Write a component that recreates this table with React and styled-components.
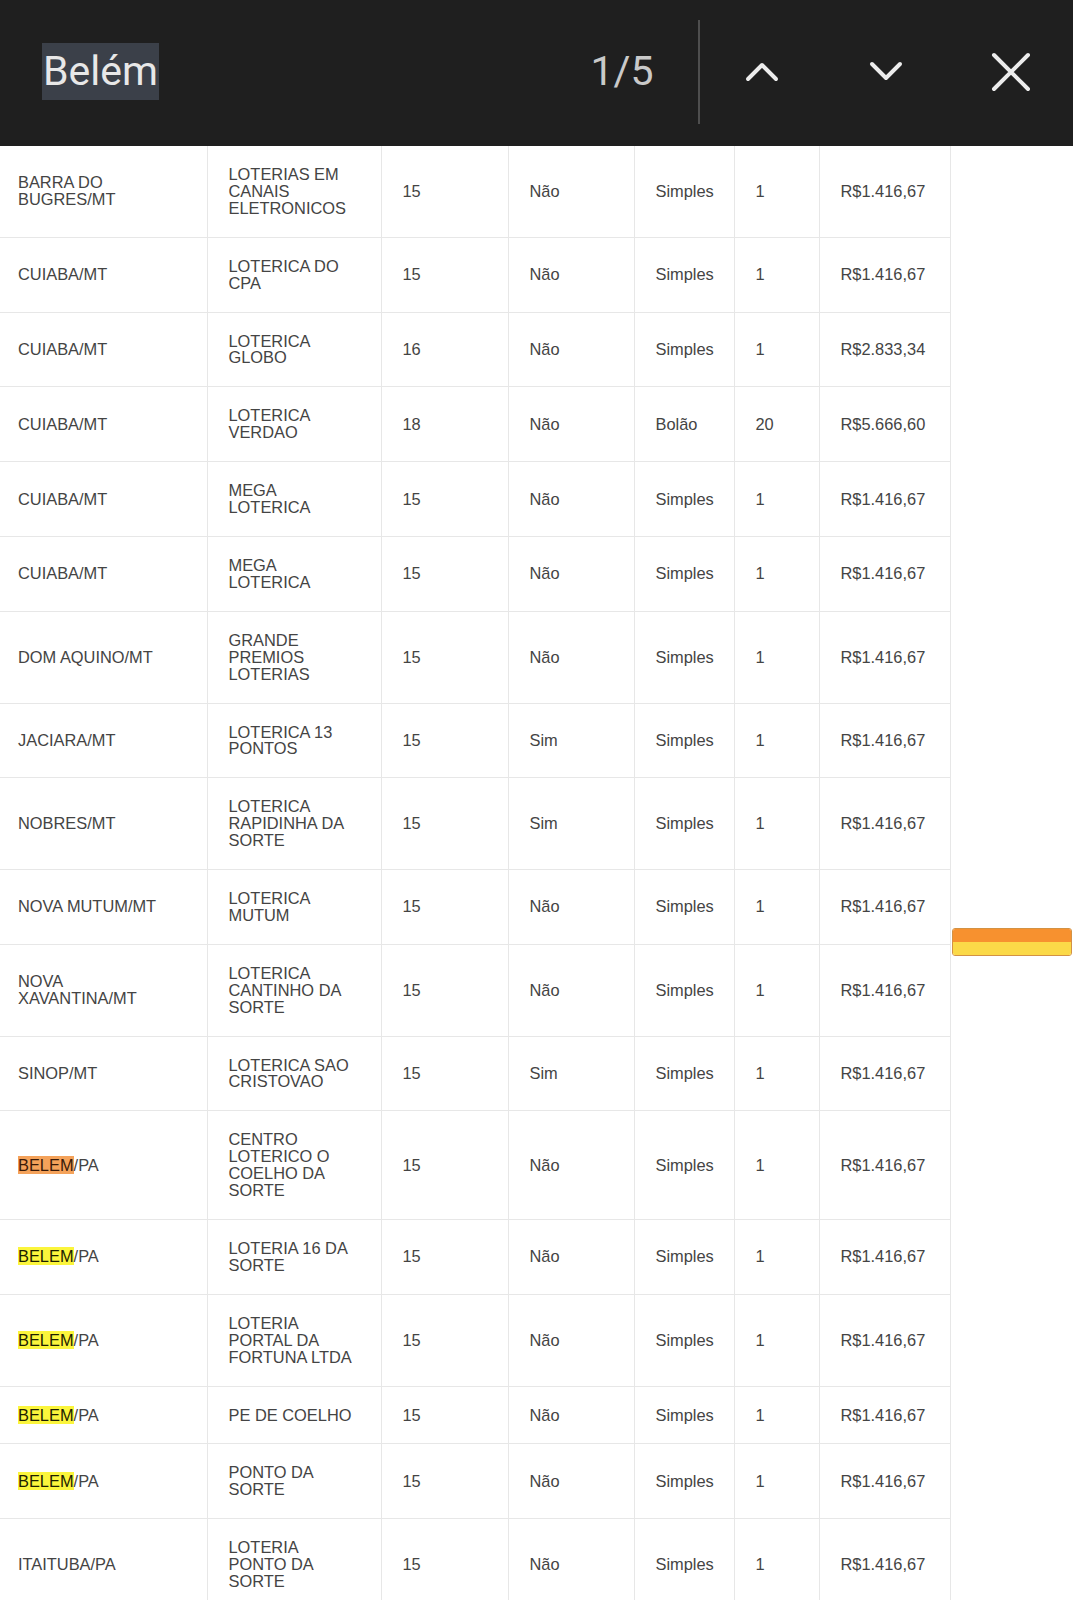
import React from "react";
import styled, { createGlobalStyle } from "styled-components";

const GlobalStyle = createGlobalStyle`
  html, body {
    margin: 0;
    padding: 0;
    background: #fff;
    scrollbar-width: none;
  }
  ::-webkit-scrollbar { display: none; }
  body {
    font-family: "Liberation Sans", Arial, sans-serif;
  }
`;

// dados da tabela
const rows = [
  { city: "BARRA DO BUGRES/MT", name: "LOTERIAS EM CANAIS ELETRONICOS", cotas: "15", acum: "Não", tipo: "Simples", qtd: "1", valor: "R$1.416,67" },
  { city: "CUIABA/MT", name: "LOTERICA DO CPA", cotas: "15", acum: "Não", tipo: "Simples", qtd: "1", valor: "R$1.416,67" },
  { city: "CUIABA/MT", name: "LOTERICA GLOBO", cotas: "16", acum: "Não", tipo: "Simples", qtd: "1", valor: "R$2.833,34" },
  { city: "CUIABA/MT", name: "LOTERICA VERDAO", cotas: "18", acum: "Não", tipo: "Bolão", qtd: "20", valor: "R$5.666,60" },
  { city: "CUIABA/MT", name: "MEGA LOTERICA", cotas: "15", acum: "Não", tipo: "Simples", qtd: "1", valor: "R$1.416,67" },
  { city: "CUIABA/MT", name: "MEGA LOTERICA", cotas: "15", acum: "Não", tipo: "Simples", qtd: "1", valor: "R$1.416,67" },
  { city: "DOM AQUINO/MT", name: "GRANDE PREMIOS LOTERIAS", cotas: "15", acum: "Não", tipo: "Simples", qtd: "1", valor: "R$1.416,67" },
  { city: "JACIARA/MT", name: "LOTERICA 13 PONTOS", cotas: "15", acum: "Sim", tipo: "Simples", qtd: "1", valor: "R$1.416,67" },
  { city: "NOBRES/MT", name: "LOTERICA RAPIDINHA DA SORTE", cotas: "15", acum: "Sim", tipo: "Simples", qtd: "1", valor: "R$1.416,67" },
  { city: "NOVA MUTUM/MT", name: "LOTERICA MUTUM", cotas: "15", acum: "Não", tipo: "Simples", qtd: "1", valor: "R$1.416,67" },
  { city: "NOVA XAVANTINA/MT", name: "LOTERICA CANTINHO DA SORTE", cotas: "15", acum: "Não", tipo: "Simples", qtd: "1", valor: "R$1.416,67" },
  { city: "SINOP/MT", name: "LOTERICA SAO CRISTOVAO", cotas: "15", acum: "Sim", tipo: "Simples", qtd: "1", valor: "R$1.416,67" },
  { city: "/PA", match: "active", name: "CENTRO LOTERICO O COELHO DA SORTE", cotas: "15", acum: "Não", tipo: "Simples", qtd: "1", valor: "R$1.416,67" },
  { city: "/PA", match: "other", name: "LOTERIA 16 DA SORTE", cotas: "15", acum: "Não", tipo: "Simples", qtd: "1", valor: "R$1.416,67" },
  { city: "/PA", match: "other", name: "LOTERIA PORTAL DA FORTUNA LTDA", cotas: "15", acum: "Não", tipo: "Simples", qtd: "1", valor: "R$1.416,67" },
  { city: "/PA", match: "other", name: "PE DE COELHO", cotas: "15", acum: "Não", tipo: "Simples", qtd: "1", valor: "R$1.416,67" },
  { city: "/PA", match: "other", name: "PONTO DA SORTE", cotas: "15", acum: "Não", tipo: "Simples", qtd: "1", valor: "R$1.416,67" },
  { city: "ITAITUBA/PA", name: "LOTERIA PONTO DA SORTE", cotas: "15", acum: "Não", tipo: "Simples", qtd: "1", valor: "R$1.416,67" },
];

const colWidths = [207, 174, 127, 126, 100, 85, 131];

export default function App() {
  return (
    <Page>
      <GlobalStyle />
      <FindBar>
        <Query>Belém</Query>
        <Counter>1/5</Counter>
        <Divider />
        <IconButton aria-label="anterior">
          <svg width="34" height="21" viewBox="0 0 34 21">
            <polyline points="3,18 17,4 31,18" fill="none" stroke="#ececec" strokeWidth="4" strokeLinecap="round" strokeLinejoin="round" />
          </svg>
        </IconButton>
        <IconButton aria-label="próximo">
          <svg width="34" height="21" viewBox="0 0 34 21">
            <polyline points="3,3 17,17 31,3" fill="none" stroke="#ececec" strokeWidth="4" strokeLinecap="round" strokeLinejoin="round" />
          </svg>
        </IconButton>
        <IconButton aria-label="fechar">
          <svg width="40" height="40" viewBox="0 0 40 40">
            <path d="M3 3 L37 37 M37 3 L3 37" fill="none" stroke="#ececec" strokeWidth="4" strokeLinecap="round" />
          </svg>
        </IconButton>
      </FindBar>

      <Content>
        <Table>
          <colgroup>
            {colWidths.map((w, i) => (
              <col key={i} style={{ width: w }} />
            ))}
          </colgroup>
          <tbody>
            {rows.map((r, i) => (
              <Row key={i}>
                <Cell first>
                  {r.match && <Mark active={r.match === "active"}>BELEM</Mark>}
                  {r.city}
                </Cell>
                <Cell>{r.name}</Cell>
                <Cell>{r.cotas}</Cell>
                <Cell>{r.acum}</Cell>
                <Cell>{r.tipo}</Cell>
                <Cell>{r.qtd}</Cell>
                <Cell>{r.valor}</Cell>
              </Row>
            ))}
          </tbody>
        </Table>
      </Content>

      <ScrollMarker>
        <MarkerPart color="#f7912f" />
        <MarkerPart color="#fbd948" />
      </ScrollMarker>
    </Page>
  );
}

const Page = styled.div`
  position: relative;
  width: 1073px;
  min-height: 1600px;
  background: #fff;
`;

const FindBar = styled.header`
  position: fixed;
  top: 0;
  left: 0;
  width: 1073px;
  height: 146px;
  box-sizing: border-box;
  padding: 0 0 3px 42px;
  display: flex;
  align-items: center;
  background: #1f1f1f;
  font-family: Roboto, "Noto Sans", sans-serif;
  z-index: 10;
`;

const Query = styled.span`
  display: inline-block;
  height: 57px;
  line-height: 57px;
  padding: 0 1px;
  background: #3b4049;
  color: #e8e8e8;
  font-size: 41px;
`;

const Counter = styled.span`
  margin-left: auto;
  margin-right: 44px;
  color: #c9c9c9;
  font-size: 41px;
  line-height: 1;
`;

const Divider = styled.div`
  width: 2px;
  height: 104px;
  background: #4e4e4e;
`;

const IconButton = styled.button`
  width: 124.5px;
  height: 100px;
  padding: 0;
  border: none;
  background: transparent;
  display: flex;
  align-items: center;
  justify-content: center;
  cursor: pointer;
`;

const Content = styled.main`
  padding-top: 146px;
`;

const Table = styled.table`
  table-layout: fixed;
  width: 950px;
  border-collapse: collapse;
  border-right: 1px solid #a6a6a6;
`;

const Row = styled.tr`
  &:first-child td {
    border-top: none;
  }
`;

const Cell = styled.td`
  padding: 20px 24px 20px ${(p) => (p.first ? "18px" : "21px")};
  border: 1px solid #e7e7e7;
  border-left: ${(p) => (p.first ? "none" : "1px solid #e7e7e7")};
  vertical-align: middle;
  color: #444;
  font-size: 16.4px;
  line-height: 16.9px;
  white-space: normal;
  overflow: visible;
`;

const Mark = styled.mark`
  background: ${(p) => (p.active ? "#f4a25a" : "#fbf53c")};
  color: ${(p) => (p.active ? "#3a1a08" : "#1e1e00")};
  padding: 0;
  line-height: 16.9px;
`;

const ScrollMarker = styled.div`
  position: absolute;
  top: 928px;
  right: 1px;
  width: 120px;
  height: 28px;
  border: 1px solid #d39244;
  border-radius: 3px;
  box-sizing: border-box;
  overflow: hidden;
  display: flex;
  flex-direction: column;
`;

const MarkerPart = styled.div`
  flex: 1;
  background: ${(p) => p.color};
`;
